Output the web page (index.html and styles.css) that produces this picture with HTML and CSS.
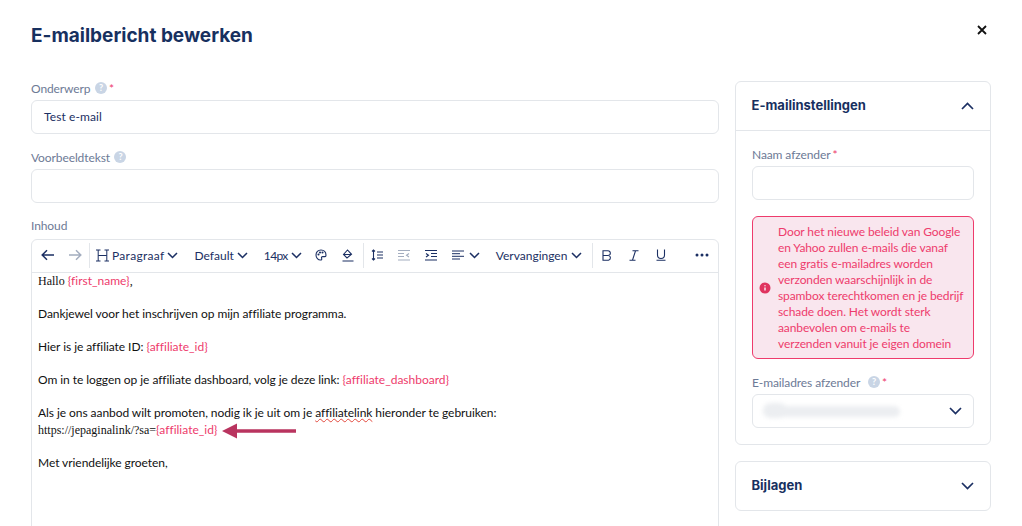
FILE: index.html
```html
<!DOCTYPE html>
<html lang="nl">
<head>
    <meta charset="UTF-8">
    <meta name="viewport" content="width=device-width, initial-scale=1.0">
    <title>E-mailbericht bewerken</title>
    <link rel="stylesheet" href="styles.css">
</head>
<body>
    <div class="modal">
        <header class="modal-head">
            <h1>E-mailbericht bewerken</h1>
            <svg class="close" width="10" height="10" viewBox="0 0 10 10"><path d="M1 1l8 8M9 1l-8 8"/></svg>
        </header>

        <div class="columns">
            <main class="main-col">
                <div class="field">
                    <div class="label">Onderwerp <span class="help">?</span><span class="req">*</span></div>
                    <div class="input">Test e-mail</div>
                </div>
                <div class="field">
                    <div class="label">Voorbeeldtekst <span class="help">?</span></div>
                    <div class="input"></div>
                </div>
                <div class="field">
                    <div class="label label-editor">Inhoud</div>
                    <div class="editor">
                        <div class="toolbar">
                            <button class="tb-btn"><svg width="14" height="12" viewBox="0 0 14 12"><path d="M13 6H1.5M6 1.2L1.2 6 6 10.8"/></svg></button>
                            <button class="tb-btn off"><svg width="14" height="12" viewBox="0 0 14 12"><path d="M1 6h11.5M8 1.2L12.8 6 8 10.8"/></svg></button>
                            <span class="sep"></span>
                            <span class="tb-select first">
                                <svg class="h-icon" width="13" height="13" viewBox="0 0 13 13"><path d="M0 1h4.500M8.500 1H13M0 12h4.500M8.500 12H13M2.200 1v11M10.800 1v11M2.200 6.500h8.600"/></svg>
                                <span class="para">Paragraaf</span>
                                <svg class="chev" width="11" height="7" viewBox="0 0 11 7"><path d="M1 1l4.500 4.500L10 1"/></svg>
                            </span>
                            <span class="tb-select">Default
                                <svg class="chev" width="11" height="7" viewBox="0 0 11 7"><path d="M1 1l4.500 4.500L10 1"/></svg>
                            </span>
                            <span class="tb-select last">14px
                                <svg class="chev" width="11" height="7" viewBox="0 0 11 7"><path d="M1 1l4.500 4.500L10 1"/></svg>
                            </span>
                            <button class="tb-btn"><svg class="thin" width="12" height="12" viewBox="0 0 12 12"><path d="M6 1C3 1 1 3.200 1 6s2.200 5 4.500 5c1.300 0 1.500-.9 1.100-1.700-.4-.9.100-1.700 1.100-1.700H10c.7 0 1-.6 1-1.300C11 3 9 1 6 1z"/><circle cx="3.500" cy="5.500" r=".5"/><circle cx="5" cy="3.500" r=".5"/><circle cx="7.500" cy="3.500" r=".5"/></svg></button>
                            <button class="tb-btn"><svg class="thin" width="12" height="13" viewBox="0 0 12 13"><path d="M5.500 1L1.500 5.500 5 9l4.500-3.700L5.500 1zM1.500 5.500h8M0.500 12h11"/></svg></button>
                            <span class="sep"></span>
                            <button class="tb-btn"><svg class="thin" width="12" height="12" viewBox="0 0 12 12"><path d="M2.500 1v10M1 2.500L2.500 1 4 2.500M1 9.500L2.500 11 4 9.500M6 3h6M6 6h6M6 9h6"/></svg></button>
                            <button class="tb-btn off"><svg class="thin" width="12" height="11" viewBox="0 0 12 11"><path d="M0 .5h12M0 3.500h6M0 6.500h6M0 10h12M11 3.500L8.500 5.300 11 7"/></svg></button>
                            <button class="tb-btn"><svg class="thin" width="12" height="11" viewBox="0 0 12 11"><path d="M0 .5h12M6 3.500h6M6 6.500h6M0 10h12M1 3.500l2.500 1.800L1 7"/></svg></button>
                            <span class="tb-select align">
                                <svg class="thin" width="12" height="10" viewBox="0 0 12 10"><path d="M0 1h12M0 3.700h8M0 6.300h12M0 9h8"/></svg>
                                <svg class="chev" width="11" height="7" viewBox="0 0 11 7"><path d="M1 1l4.500 4.500L10 1"/></svg>
                            </span>
                            <span class="tb-select subst">Vervangingen
                                <svg class="chev" width="11" height="7" viewBox="0 0 11 7"><path d="M1 1l4.500 4.500L10 1"/></svg>
                            </span>
                            <span class="sep"></span>
                            <button class="tb-btn"><svg class="thin" width="10" height="11" viewBox="0 0 10 11"><path d="M1 .8h5a2.300 2.300 0 0 1 0 4.700H1zM1 5.500h5.500a2.400 2.400 0 0 1 0 4.700H1z"/></svg></button>
                            <button class="tb-btn"><svg class="thin" width="10" height="11" viewBox="0 0 10 11"><path d="M3.500.8H9.500M.5 10.200h6M6.500.8l-3 9.400"/></svg></button>
                            <button class="tb-btn"><svg class="thin" width="10" height="12" viewBox="0 0 10 12"><path d="M1.500.5v5.500a3.500 3.500 0 0 0 7 0V.5M.5 11.300h9"/></svg></button>
                            <button class="tb-btn more"><svg width="14" height="4" viewBox="0 0 14 4"><circle cx="2" cy="2" r="1.500"/><circle cx="7" cy="2" r="1.500"/><circle cx="12" cy="2" r="1.500"/></svg></button>
                        </div>
                        <div class="content">
                            <p><span class="serif">Hallo</span> <span class="var">{first_name}</span><span class="serif">,</span></p>
                            <p>&nbsp;</p>
                            <p>Dankjewel voor het inschrijven op mijn affiliate programma.</p>
                            <p>&nbsp;</p>
                            <p>Hier is je affiliate ID: <span class="var">{affiliate_id}</span></p>
                            <p>&nbsp;</p>
                            <p>Om in te loggen op je affiliate dashboard, volg je deze link: <span class="var">{affiliate_dashboard}</span></p>
                            <p>&nbsp;</p>
                            <p>Als je ons aanbod wilt promoten, nodig ik je uit om je <span class="typo">affiliatelink</span> hieronder te gebruiken:</p>
                            <p class="link-row"><span class="serif">https://jepaginalink/?sa=</span><span class="var">{affiliate_id}</span>
                                <svg class="arrow" width="75" height="16" viewBox="0 0 75 16"><path d="M0 8L15 .5v5.800h59v3.400H15v5.800z"/></svg>
                            </p>
                            <p>&nbsp;</p>
                            <p>Met vriendelijke groeten,</p>
                        </div>
                    </div>
                </div>
            </main>

            <aside class="side-col">
                <section class="card">
                    <div class="card-head">
                        <h2>E-mailinstellingen</h2>
                        <svg class="chev big" width="13" height="8" viewBox="0 0 13 8"><path d="M1 7l5.500-5.500L12 7"/></svg>
                    </div>
                    <div class="card-body">
                        <div class="label">Naam afzender<span class="req">*</span></div>
                        <div class="input"></div>
                        <div class="alert">
                            <svg class="alert-icon" width="12" height="12" viewBox="0 0 12 12"><circle cx="6" cy="6" r="5.500"/><path d="M6 5.500v3M6 3.200v1"/></svg>
                            <p>Door het nieuwe beleid van Google en Yahoo zullen e-mails die vanaf een gratis e-mailadres worden verzonden waarschijnlijk in de spambox terechtkomen en je bedrijf schade doen. Het wordt sterk aanbevolen om e-mails te verzenden vanuit je eigen domein</p>
                        </div>
                        <div class="label">E-mailadres afzender <span class="help">?</span><span class="req">*</span></div>
                        <div class="input select">
                            <span class="smudge"></span>
                            <svg class="chev big" width="13" height="8" viewBox="0 0 13 8"><path d="M1 1l5.500 5.500L12 1"/></svg>
                        </div>
                    </div>
                </section>
                <section class="card">
                    <div class="card-head closed">
                        <h2>Bijlagen</h2>
                        <svg class="chev big" width="13" height="8" viewBox="0 0 13 8"><path d="M1 1l5.500 5.500L12 1"/></svg>
                    </div>
                </section>
            </aside>
        </div>
    </div>
</body>
</html>
```

FILE: styles.css
```css
* {
    box-sizing: border-box;
}

html, body {
    height: 100%;
    overflow: hidden;
}

body {
    margin: 0;
    background-color: #fff;
    color: #1b2f63;
    font-family: 'Lato', sans-serif;
    font-size: 12px;
    font-variant-ligatures: none;
}

.modal {
    padding: 23px 31px 0;
}

.modal-head {
    display: flex;
    justify-content: space-between;
    height: 58px;
}

.modal-head h1 {
    margin: 0;
    font-family: 'Inter', sans-serif;
    font-size: 19px;
    line-height: 26px;
    font-weight: 700;
    color: #17305f;
}

.close {
    margin: 2px 4px 0 0;
    fill: none;
    stroke: #111;
    stroke-width: 1.8;
}

.columns {
    display: flex;
    gap: 16px;
}

.main-col {
    width: 688px;
    flex: none;
}

.side-col {
    width: 256px;
    flex: none;
}

.field {
    margin-bottom: 16px;
}

.label {
    display: flex;
    align-items: center;
    height: 14px;
    margin-bottom: 5px;
    color: #6d7a96;
    font-size: 12px;
    letter-spacing: -0.1px;
    white-space: pre;
}

.label-editor {
    margin-top: -1px;
    margin-bottom: 7px;
}

.help {
    display: inline-block;
    width: 12px;
    height: 12px;
    margin-left: 1.500px;
    border-radius: 50%;
    background-color: #c9d5e5;
    color: #fff;
    font-size: 9px;
    font-weight: 700;
    line-height: 12px;
    text-align: center;
}

.side-col .help {
    margin-left: 5px;
}

.req {
    margin: 0 0 0 2px;
    color: #ee3b6c;
    font-size: 12px;
}

.input {
    height: 34px;
    padding: 0 12px;
    border: 1px solid #e3e6ea;
    border-radius: 6px;
    line-height: 31px;
    letter-spacing: 0.1px;
    color: #1b2f63;
}

/* editor */
.editor {
    height: 400px;
    border: 1px solid #e3e6ea;
    border-radius: 6px;
}

.toolbar {
    display: flex;
    align-items: center;
    height: 33px;
    padding: 0 0 2px 2px;
    border-bottom: 1px solid #e3e6ea;
}

.tb-btn {
    display: flex;
    align-items: center;
    justify-content: center;
    width: 27px;
    height: 25px;
    padding: 0;
    border: 0;
    background: none;
}

.tb-btn svg {
    fill: none;
    stroke: #1b2f63;
    stroke-width: 1.5;
}

.tb-btn svg.thin {
    stroke-width: 1.1;
}

.tb-btn.off svg {
    stroke: #a3adbf;
}

.tb-btn.more {
    margin-left: auto;
    margin-right: 3px;
}

.tb-btn.more svg {
    fill: #1b2f63;
    stroke: none;
}

.sep {
    width: 1px;
    height: 25px;
    margin-left: 1px;
    background-color: #e3e6ea;
}

.tb-select {
    display: flex;
    align-items: center;
    gap: 3px;
    margin-right: 16px;
    font-size: 12px;
    white-space: nowrap;
}

.tb-select.first {
    margin-left: 6px;
}

.para {
    letter-spacing: 0.3px;
}

.tb-select.last {
    margin-right: 6px;
    letter-spacing: -0.6px;
}

.tb-select.align {
    margin-left: 7px;
    gap: 5px;
}

.tb-select.subst {
    gap: 4px;
    margin-right: 9px;
}

.tb-select svg {
    fill: none;
    stroke: #1b2f63;
}

.h-icon {
    stroke-width: 1;
}

.chev {
    fill: none;
    stroke: #1b2f63;
    stroke-width: 1.5;
}

.chev.big {
    stroke-width: 1.7;
}

.content {
    padding: 0 6px;
    color: #111;
    font-size: 12px;
    line-height: 16.5px;
    letter-spacing: -0.06px;
}

.content p {
    margin: 0;
    white-space: nowrap;
}

.serif {
    font-family: 'Liberation Serif', serif;
    font-size: 12px;
    letter-spacing: 0;
}

.var {
    color: #ee3b6c;
    letter-spacing: 0;
}

.typo {
    text-decoration: underline wavy #e2483c 1px;
}

.link-row {
    position: relative;
}

.arrow {
    position: absolute;
    left: 184px;
    top: 1px;
    fill: #b9345f;
}

/* sidebar */
.card {
    margin-bottom: 16px;
    border: 1px solid #e3e6ea;
    border-radius: 6px;
}

.card-head {
    display: flex;
    align-items: center;
    justify-content: space-between;
    height: 49px;
    padding: 0 16px 0 15.500px;
    border-bottom: 1px solid #e3e6ea;
}

.card-head.closed {
    border-bottom: 0;
    height: 48px;
}

.card-head h2 {
    margin: 0 0 2px;
    font-family: 'Inter', sans-serif;
    font-size: 13px;
    font-weight: 700;
    color: #17305f;
}

.card-body {
    padding: 16px;
}

.card-body .input {
    width: 222px;
}

.alert {
    display: flex;
    align-items: center;
    gap: 7px;
    width: 222px;
    height: 143px;
    margin: 16px 0;
    padding: 0 9px 0 6px;
    border: 1px solid #ee3b6c;
    border-radius: 6px;
    background-color: #f9e6ee;
    color: #ee3b6c;
}

.alert p {
    margin: 0;
    font-size: 12px;
    line-height: 16px;
    letter-spacing: -0.1px;
}

.alert-icon {
    flex: none;
}

.alert-icon circle {
    fill: #e0345f;
}

.alert-icon path {
    stroke: #f9e6ee;
    stroke-width: 1.5;
    fill: none;
}

.input.select {
    display: flex;
    align-items: center;
    justify-content: space-between;
    padding: 0 11px 0 10px;
}

.smudge {
    position: relative;
    width: 137px;
    height: 11px;
    border-radius: 6px;
    background-color: #eceef1;
    filter: blur(2px);
}

.smudge::before {
    content: "";
    position: absolute;
    left: 0;
    top: -3px;
    width: 24px;
    height: 15px;
    border-radius: 8px;
    background-color: #eceef1;
}
```
